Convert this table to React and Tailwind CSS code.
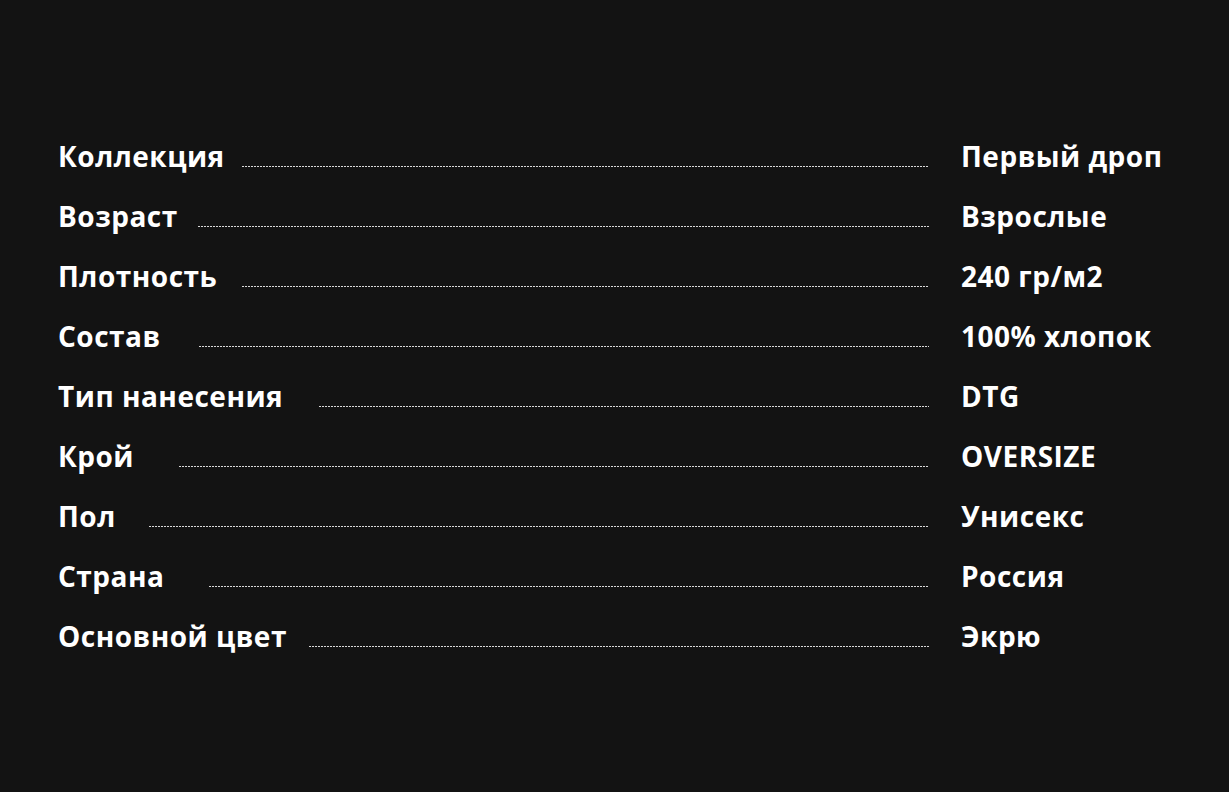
import React from 'react';

const specs = [
  { label: 'Коллекция', value: 'Первый дроп', lineStart: 'w-[184px]' },
  { label: 'Возраст', value: 'Взрослые', lineStart: 'w-[140px]' },
  { label: 'Плотность', value: '240 гр/м2', lineStart: 'w-[184px]' },
  { label: 'Состав', value: '100% хлопок', lineStart: 'w-[141px]' },
  { label: 'Тип нанесения', value: 'DTG', lineStart: 'w-[261px]' },
  { label: 'Крой', value: 'OVERSIZE', lineStart: 'w-[121px]' },
  { label: 'Пол', value: 'Унисекс', lineStart: 'w-[91px]' },
  { label: 'Страна', value: 'Россия', lineStart: 'w-[151px]' },
  { label: 'Основной цвет', value: 'Экрю', lineStart: 'w-[251px]' },
];

function SpecRow({ label, value, lineStart }) {
  return (
    <div className="flex items-end h-[60px]">
      <div className={`${lineStart} shrink-0 whitespace-nowrap`}>{label}</div>
      <div className="flex-1 mb-[6px] h-px bg-[repeating-linear-gradient(90deg,#d9d9d9_0_2px,transparent_2px_3px)]"></div>
      <div className="w-[268px] ml-[32px] shrink-0 whitespace-nowrap">{value}</div>
    </div>
  );
}

export default function App() {
  return (
    <div className="min-h-screen bg-[#131313] text-white font-['Open_Sans',sans-serif] font-bold text-[28px] leading-[34px] tracking-[0.5px]">
      <div className="pl-[58px] pt-[113px]">
        {specs.map((s) => (
          <SpecRow key={s.label} {...s} />
        ))}
      </div>
    </div>
  );
}
